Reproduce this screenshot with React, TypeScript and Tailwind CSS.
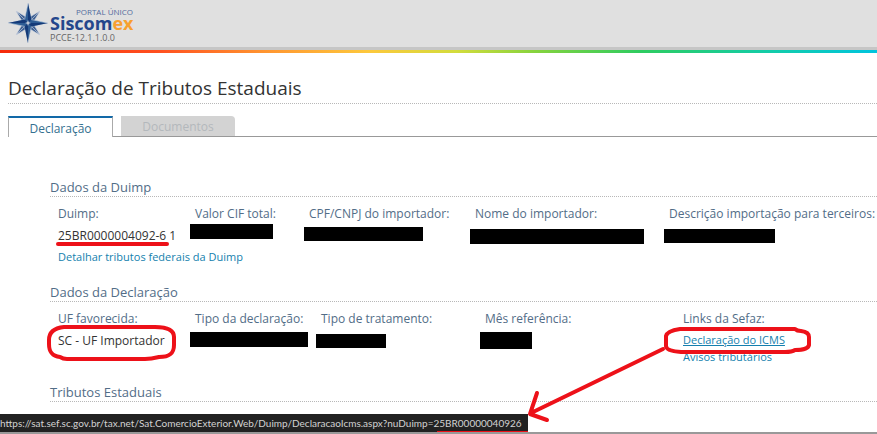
import type { ReactNode } from 'react';

function StarLogo() {
  return (
    <svg viewBox="0 0 40 40" className="h-10 w-10 shrink-0" aria-hidden="true">
      <g stroke="#cfd6e2" strokeWidth="0.6">
        <g transform="rotate(45 20 20)">
          <path d="M20 3 L23.5 16.5 L37 20 L23.5 23.5 L20 37 L16.5 23.5 L3 20 L16.5 16.5 Z" fill="#3d6093" />
          <path d="M20 4 V36 M4 20 H36" />
        </g>
        <path d="M20 0 L23.4 16.6 L40 20 L23.4 23.4 L20 40 L16.6 23.4 L0 20 L16.6 16.6 Z" fill="#2d5c94" />
      </g>
      <path d="M20 0 L23.4 16.6 L20 20 Z M40 20 L23.4 23.4 L20 20 Z M20 40 L16.6 23.4 L20 20 Z M0 20 L16.6 16.6 L20 20 Z" fill="#143a78" />
      <path d="M20 17 L20.8 19.2 L23 20 L20.8 20.8 L20 23 L19.2 20.8 L17 20 L19.2 19.2 Z" fill="#c7cfdb" />
    </svg>
  );
}

function Section({ title, children }: { title: string; children?: ReactNode }) {
  return (
    <section>
      <h2 className="border-b border-dotted border-[#b8b8b8] text-[13px] leading-[18px] text-[#526d87]">{title}</h2>
      {children}
    </section>
  );
}

function Field({ label, children }: { label: string; children: ReactNode }) {
  return (
    <div className="whitespace-nowrap">
      <dt className="pl-[5px] leading-5 text-[#526d87]">{label}</dt>
      <dd>{children}</dd>
    </div>
  );
}

function Redacted({ className }: { className: string }) {
  return <span className={`block bg-black ${className}`} />;
}

export default function App() {
  return (
    <div className="relative flex min-h-screen flex-col overflow-hidden border-b-2 border-[#999] bg-white font-['Open_Sans','Noto_Sans',sans-serif] text-[12px] text-[#333]">
      <header>
        <div className="flex h-[50px] items-start border-b-[3px] border-[#c6c6c6] bg-[#e0e0e0] pt-[3px] pl-2">
          <StarLogo />
          <div className="flex w-[85px] flex-col pt-[5px] pl-[2px]">
            <span className="text-right text-[8px] leading-[8px] whitespace-nowrap text-[#526b9d]">PORTAL ÚNICO</span>
            <span className="text-[18px] leading-[14px] font-bold text-[#24468c]">
              Siscom<span className="text-[#f7a030]">ex</span>
            </span>
            <span className="text-[9px] leading-4 whitespace-nowrap text-[#666]">PCCE-12.1.1.0.0</span>
          </div>
        </div>
        <div className="h-[3px] bg-[linear-gradient(90deg,#f52a0a_0%,#ff4f1f_18%,#ff9430_30%,#fdc83c_42%,#d3dc3c_52%,#86d33d_61%,#2ecc60_73%,#12ccaa_88%,#00c4de_100%)]" />
      </header>

      <main className="flex flex-col pl-2">
        <h1 className="mt-[23px] border-b border-dotted border-[#b8b8b8] pb-[3px] text-[19px] leading-6">Declaração de Tributos Estaduais</h1>
        <nav className="mt-3 flex h-[21px]">
          <button type="button" className="w-[105px] border-x border-t-2 border-x-[#aaa] border-t-[#1269a8] pt-[2px] leading-4 text-[#34708f]">
            Declaração
          </button>
          <div className="flex grow border-b border-[#999] pl-2">
            <button type="button" disabled className="w-[114px] rounded-tr-sm bg-[#d3d3d3] pt-px leading-4 text-[#b3b8bc]">
              Documentos
            </button>
          </div>
        </nav>

        <div className="flex flex-col pt-[41px] pl-[42px]">
          <Section title="Dados da Duimp">
            <dl className="grid h-[86px] grid-cols-[137px_114px_166px_194px_1fr] pt-[7px] pl-[3px]">
              <Field label="Duimp:">
                <span className="block pt-[2px] pl-[5px] leading-5">25BR0000004092-6 1</span>
                <a href="#detalhar" className="block pl-[5px] pt-px leading-5 text-[11px] text-[#147fae]">
                  Detalhar tributos federais da Duimp
                </a>
              </Field>
              <Field label="Valor CIF total:"><Redacted className="h-[15px] w-[83px]" /></Field>
              <Field label="CPF/CNPJ do importador:"><Redacted className="mt-[3px] h-[14px] w-[119px]" /></Field>
              <Field label="Nome do importador:"><Redacted className="mt-[5px] h-[15px] w-[174px]" /></Field>
              <Field label="Descrição importação para terceiros:"><Redacted className="mt-[5px] h-[14px] w-[111px]" /></Field>
            </dl>
          </Section>
          <Section title="Dados da Declaração">
            <dl className="grid h-[81px] grid-cols-[137px_126px_164px_198px_1fr] pt-[7px] pl-[3px]">
              <Field label="UF favorecida:">
                <span className="block pt-[2px] pl-[5px] leading-5">SC - UF Importador</span>
              </Field>
              <Field label="Tipo da declaração:"><Redacted className="mt-[3px] h-[15px] w-[118px]" /></Field>
              <Field label="Tipo de tratamento:"><Redacted className="mt-[5px] h-[14px] w-[70px]" /></Field>
              <Field label="Mês referência:"><Redacted className="mt-[3px] h-[17px] w-[52px]" /></Field>
              <Field label="Links da Sefaz:">
                <a href="#icms" className="block pt-[2px] pl-[5px] text-[11px] leading-[18px] text-[#147fae] underline">Declaração do ICMS</a>
                <a href="#avisos" className="block pl-[5px] text-[11px] leading-4 text-[#147fae]">Avisos tributários</a>
              </Field>
            </dl>
          </Section>
          <Section title="Tributos Estaduais" />
        </div>
      </main>

      <div className="absolute bottom-0 left-0 h-[18px] w-[528px] bg-[#222] font-['Lato','Open_Sans',sans-serif] text-[10px] leading-[18px] whitespace-nowrap text-[#d2d2d2]">
        https://sat.sef.sc.gov.br/tax.net/Sat.ComercioExterior.Web/Duimp/DeclaracaoIcms.aspx?nuDuimp=25BR00000040926
      </div>
      <svg viewBox="0 0 877 434" className="pointer-events-none absolute top-0 left-0 h-[434px] w-[877px]" fill="none" stroke="#ed1119" strokeWidth="4" strokeLinecap="round" strokeLinejoin="round" aria-hidden="true">
        <path d="M58 244 H167" />
        <path d="M64 327 H155 C168 327 174 331 174 337 V345 C174 354 169 357 159 357 Q151 359 145 359 H67 Q63 359 60 357 C52 356 49 352 49 344 V340 C49 332 54 328 64 327 Z" />
        <path d="M680 329 H795 Q797 331 801 331 Q809 332 809 337 V345 Q808 350 795 350 Q792 352 785 352 H681 Q666 351 666 346 V336 Q667 331 680 329 Z" />
        <path d="M663 349 L531 413 M537 393 L530 414 L547 420" />
        <path d="M437 433 H528" strokeLinecap="butt" />
      </svg>
    </div>
  );
}
